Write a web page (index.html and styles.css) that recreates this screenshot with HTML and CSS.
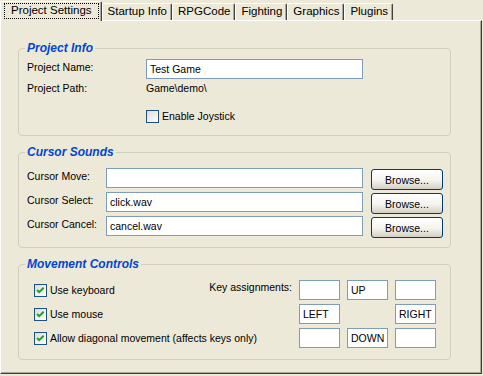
FILE: index.html
```html
<!DOCTYPE html>
<html lang="en">
<head>
    <meta charset="UTF-8">
    <title>Project Settings</title>
    <link rel="stylesheet" href="styles.css">
</head>
<body>
    <div class="dialog">
        <div class="tabs">
            <div class="tab active"><span class="focus">Project Settings</span></div>
            <div class="tab">Startup Info</div>
            <div class="tab">RPGCode</div>
            <div class="tab">Fighting</div>
            <div class="tab">Graphics</div>
            <div class="tab">Plugins</div>
        </div>

        <div class="panel">
            <fieldset class="group info">
                <legend>Project Info</legend>
                <div class="info-grid">
                    <span class="lbl">Project Name:</span>
                    <input type="text" class="field" value="Test Game">
                    <span class="lbl path">Project Path:</span>
                    <span class="path">Game\demo\</span>
                    <span></span>
                    <span class="check"><span class="box"></span>Enable Joystick</span>
                </div>
            </fieldset>

            <fieldset class="group sounds">
                <legend>Cursor Sounds</legend>
                <div class="sound-row">
                    <span class="lbl">Cursor Move:</span>
                    <input type="text" class="field" value="">
                    <button class="btn">Browse...</button>
                </div>
                <div class="sound-row">
                    <span class="lbl">Cursor Select:</span>
                    <input type="text" class="field" value="click.wav">
                    <button class="btn">Browse...</button>
                </div>
                <div class="sound-row">
                    <span class="lbl">Cursor Cancel:</span>
                    <input type="text" class="field" value="cancel.wav">
                    <button class="btn">Browse...</button>
                </div>
            </fieldset>

            <fieldset class="group moves">
                <legend>Movement Controls</legend>
                <div class="move-grid">
                    <span class="check"><span class="box"><svg viewBox="0 0 11 11"><path d="M2 5 L4.2 7.2 L8.6 2.8"/></svg></span>Use keyboard</span>
                    <span class="keys-lbl">Key assignments:</span>
                    <input type="text" class="field key" value="">
                    <input type="text" class="field key" value="UP">
                    <input type="text" class="field key" value="">

                    <span class="check"><span class="box"><svg viewBox="0 0 11 11"><path d="M2 5 L4.2 7.2 L8.6 2.8"/></svg></span>Use mouse</span>
                    <span></span>
                    <input type="text" class="field key" value="LEFT">
                    <span></span>
                    <input type="text" class="field key" value="RIGHT">

                    <span class="check wide"><span class="box"><svg viewBox="0 0 11 11"><path d="M2 5 L4.2 7.2 L8.6 2.8"/></svg></span>Allow diagonal movement (affects keys only)</span>
                    <input type="text" class="field key" value="">
                    <input type="text" class="field key" value="DOWN">
                    <input type="text" class="field key" value="">
                </div>
            </fieldset>
        </div>
    </div>
</body>
</html>
```

FILE: styles.css
```css
body {
    margin: 0;
    background: #ECE9D8;
    font: 10.5px/13px "Liberation Sans", Arial, sans-serif;
    color: #000;
}

.dialog {
    width: 482px;
    height: 374px;
    display: flex;
    flex-direction: column;
}

.tabs {
    display: flex;
    align-items: flex-end;
    height: 20px;
    font-size: 11.5px;
}

.tab {
    box-sizing: border-box;
    height: 17px;
    padding: 1px 4px 0 5px;
    background: #ECE9D8;
    border-left: 1px solid #fff;
    border-top: 1px solid #fff;
    border-right: 1px solid #404040;
    box-shadow: inset -1px 0 #ACA899;
    border-radius: 2px 2px 0 0;
    white-space: nowrap;
}

.tab.active {
    position: relative;
    z-index: 1;
    height: 20px;
    margin-bottom: -1px;
    padding: 1px 2px 0 3px;
}

.tab .focus {
    display: block;
    padding: 1px 7px 2px 7px;
    outline: 1px dotted #000;
    outline-offset: -1px;
}

.panel {
    flex: 1;
    border-top: 1px solid #fff;
    border-left: 1px solid #fff;
    border-right: 1px solid #404040;
    border-bottom: 1px solid #404040;
    box-shadow: inset -1px -1px #ACA899;
    padding: 0 30px 0 17px;
}

.group {
    margin: 20px 0 0 0;
    padding: 3px 7px 9px 8px;
    border: 1px solid #D0D0BF;
    border-radius: 4px;
    min-inline-size: 0;
}

.group + .group {
    margin-top: 9px;
}

.group legend {
    padding: 0 2px;
    margin-left: -2px;
    font: bold italic 12px/15px "Liberation Sans", Arial, sans-serif;
    color: #0046D5;
}

.field {
    box-sizing: border-box;
    height: 20px;
    margin: 0;
    padding: 0 3px;
    border: 1px solid #7F9DB9;
    background: #fff;
    font: 10.5px "Liberation Sans", Arial, sans-serif;
    color: #000;
}

.lbl {
    padding-top: 2px;
}

/* project info */
.info-grid {
    display: grid;
    grid-template-columns: 119px 217px;
    grid-template-rows: 23px 24px 20px;
    align-items: start;
}

.info-grid .path {
    padding-top: 0;
}

.info-grid .check {
    align-self: center;
}

.check {
    display: flex;
    align-items: center;
    gap: 3px;
    white-space: nowrap;
}

.box {
    box-sizing: border-box;
    width: 13px;
    height: 13px;
    border: 1px solid #1C5180;
    background: linear-gradient(135deg, #DCDCD7, #fff);
}

.box svg {
    display: block;
    width: 11px;
    height: 11px;
}

.box path {
    fill: none;
    stroke: #21A121;
    stroke-width: 2;
}

/* cursor sounds */
.sounds {
    padding-top: 8px;
}

.sound-row {
    display: flex;
    align-items: flex-start;
    height: 22px;
}

.sound-row + .sound-row {
    margin-top: 2px;
}

.sound-row .lbl {
    width: 79px;
}

.sound-row .field {
    width: 257px;
}

.btn {
    box-sizing: border-box;
    width: 72px;
    height: 21px;
    margin: 1px 0 0 8px;
    padding: 0;
    border: 1px solid #003C74;
    border-radius: 3px;
    background: linear-gradient(#fff, #F4F3EE 55%, #D6D0C5);
    font: 10.5px "Liberation Sans", Arial, sans-serif;
    color: #000;
}

/* movement */
.moves {
    padding: 8px 14px 11px 15px;
}

.moves legend {
    margin-left: -9px;
}

.move-grid {
    display: grid;
    grid-template-columns: 1fr auto 41px 41px 41px;
    grid-template-rows: repeat(3, 20px);
    gap: 4px 7px;
    align-items: center;
}

.move-grid .wide {
    grid-column: 1 / 3;
}

.keys-lbl {
    align-self: start;
    padding-top: 1px;
    white-space: nowrap;
}

.key {
    width: 41px;
}
```
